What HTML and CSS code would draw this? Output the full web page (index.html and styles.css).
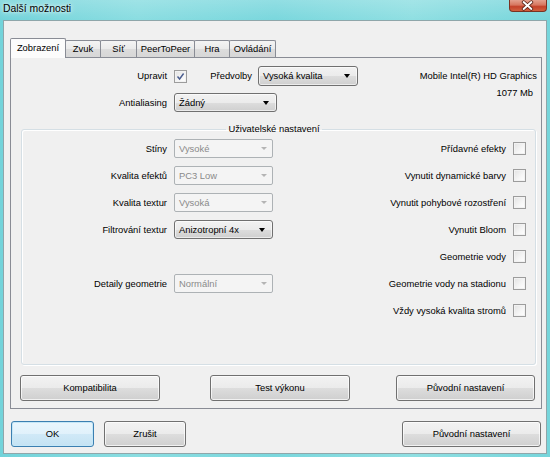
FILE: index.html
```html
<!DOCTYPE html>
<html lang="cs">
<head>
<meta charset="utf-8">
<title>Další možnosti</title>
<link rel="stylesheet" href="styles.css">
</head>
<body>
<div class="window">
  <div class="titlebar">
    <span class="title">Další možnosti</span>
    <div class="close">
      <svg width="38" height="12" viewBox="0 0 38 12">
        <path d="M15 2 L23 9 M23 2 L15 9" stroke="#5a2418" stroke-width="3.6" stroke-linecap="round" fill="none"/>
        <path d="M15 2 L23 9 M23 2 L15 9" stroke="#ffffff" stroke-width="2" stroke-linecap="round" fill="none"/>
      </svg>
    </div>
  </div>
  <div class="client">
    <div class="tabs">
      <div class="tab active t1">Zobrazení</div>
      <div class="tab t2">Zvuk</div>
      <div class="tab t3">Síť</div>
      <div class="tab t4">PeerToPeer</div>
      <div class="tab t5">Hra</div>
      <div class="tab t6">Ovládání</div>
    </div>
    <div class="panel">
      <div class="top">
        <div class="top-grid">
          <span class="lbl">Upravit</span>
          <div class="row1">
            <span class="chk">
              <svg width="11" height="11" viewBox="0 0 11 11"><path d="M2.5 5.5 L4.6 8 L8.6 2.5" stroke="#4a5d8f" stroke-width="1.4" fill="none"/></svg>
            </span>
            <span class="lbl preset-lbl">Předvolby</span>
            <div class="combo w-preset"><span>Vysoká kvalita</span><i class="arrow"></i></div>
          </div>
          <span class="lbl">Antialiasing</span>
          <div class="combo w-aa"><span>Žádný</span><i class="arrow"></i></div>
        </div>
        <div class="info">
          <div>Mobile Intel(R) HD Graphics</div>
          <div class="mem">1077 Mb</div>
        </div>
      </div>

      <fieldset class="group">
        <legend>Uživatelské nastavení</legend>
        <div class="group-grid">
          <span class="lbl">Stíny</span>
          <div class="combo dis"><span>Vysoké</span><i class="arrow"></i></div>
          <span class="lbl">Přídavné efekty</span>
          <span class="chk"></span>

          <span class="lbl">Kvalita efektů</span>
          <div class="combo dis"><span>PC3 Low</span><i class="arrow"></i></div>
          <span class="lbl">Vynutit dynamické barvy</span>
          <span class="chk"></span>

          <span class="lbl">Kvalita textur</span>
          <div class="combo dis"><span>Vysoká</span><i class="arrow"></i></div>
          <span class="lbl">Vynutit pohybové rozostření</span>
          <span class="chk"></span>

          <span class="lbl">Filtrování textur</span>
          <div class="combo"><span>Anizotropní 4x</span><i class="arrow"></i></div>
          <span class="lbl">Vynutit Bloom</span>
          <span class="chk"></span>

          <span></span>
          <span></span>
          <span class="lbl">Geometrie vody</span>
          <span class="chk"></span>

          <span class="lbl">Detaily geometrie</span>
          <div class="combo dis"><span>Normální</span><i class="arrow"></i></div>
          <span class="lbl">Geometrie vody na stadionu</span>
          <span class="chk"></span>

          <span></span>
          <span></span>
          <span class="lbl">Vždy vysoká kvalita stromů</span>
          <span class="chk"></span>
        </div>
      </fieldset>

      <div class="panel-buttons">
        <div class="btn w140">Kompatibilita</div>
        <div class="btn w140 mid">Test výkonu</div>
        <div class="btn w140 last">Původní nastavení</div>
      </div>
    </div>

    <div class="dialog-buttons">
      <div class="btn default ok">OK</div>
      <div class="btn cancel">Zrušit</div>
      <div class="btn reset">Původní nastavení</div>
    </div>
  </div>
</div>
</body>
</html>
```

FILE: styles.css
```css
html, body {
  margin: 0;
  padding: 0;
}

body {
  width: 550px;
  height: 457px;
  overflow: hidden;
  font-family: "Liberation Sans", Arial, sans-serif;
  font-size: 9.4px;
  color: #000;
}

.window {
  height: 457px;
  display: flex;
  flex-direction: column;
  background:
    linear-gradient(180deg, rgba(255,255,255,0.18), rgba(255,255,255,0) 20px),
    linear-gradient(90deg, #72d3da 0%, #8adde1 25%, #7ad7dd 50%, #8fdfe2 75%, #76d5db 100%);
}

.titlebar {
  height: 20px;
  flex: none;
  display: flex;
  align-items: flex-start;
}

.title {
  padding: 3px 0 0 3px;
  font-size: 10.4px;
  line-height: 12px;
  color: #000;
  text-shadow: 0 0 6px rgba(255,255,255,0.9), 0 0 3px rgba(255,255,255,0.8);
}

.close {
  margin-left: auto;
  margin-right: 3px;
  width: 38px;
  height: 12px;
  box-sizing: border-box;
  border: 1px solid #7a3222;
  border-top: none;
  border-radius: 0 0 4px 4px;
  background: linear-gradient(180deg, #e4a08e 0%, #d77760 45%, #c4422a 60%, #d1603f 100%);
  display: flex;
}

.close svg {
  display: block;
  margin-left: -1px;
}

.client {
  flex: 1;
  margin: 0 3px 3px 3px;
  border: 1px solid #8fa6aa;
  background: #f0f0f0;
  padding: 17px 4px 0 6px;
  display: flex;
  flex-direction: column;
}

/* Tabs */
.tabs {
  display: flex;
  align-items: flex-end;
  height: 19px;
}

.tab {
  box-sizing: border-box;
  height: 17px;
  border: 1px solid #898c95;
  border-bottom: none;
  border-radius: 2px 2px 0 0;
  margin-left: -1px;
  background: linear-gradient(180deg, #f4f4f4 0%, #eaeaea 50%, #dcdcdc 51%, #d7d7d7 100%);
  display: flex;
  align-items: center;
  justify-content: center;
  line-height: 12px;
}

.tab.active {
  height: 20px;
  margin-left: 0;
  margin-bottom: -1px;
  background: #fcfcfc;
  position: relative;
  z-index: 1;
  padding-bottom: 2px;
}

.t1 { width: 56px; }
.t2 { width: 36px; }
.t3 { width: 37px; }
.t4 { width: 59px; }
.t5 { width: 36px; }
.t6 { width: 47px; }

.panel {
  border: 1px solid #898c95;
  background: #f0f0f0;
  padding: 8px 0 7px 0;
}

.lbl {
  text-align: right;
  white-space: nowrap;
  align-self: center;
  line-height: 12px;
}

.top {
  display: flex;
  align-items: flex-start;
}

.top-grid {
  display: grid;
  grid-template-columns: 156px auto;
  grid-template-rows: 20px 19px;
  column-gap: 7px;
  row-gap: 7px;
}

.row1 {
  display: flex;
  align-items: center;
}

.preset-lbl {
  width: 71px;
  box-sizing: border-box;
  padding-right: 6px;
}

.info {
  margin-left: auto;
  padding: 4px 4px 0 0;
  text-align: right;
  line-height: 12px;
}

.info .mem {
  margin-top: 5px;
  padding-right: 4px;
}

/* Combo boxes */
.combo {
  box-sizing: border-box;
  height: 19px;
  width: 99px;
  border: 1px solid #707070;
  border-radius: 3px;
  background: linear-gradient(180deg, #f2f2f2 0%, #ebebeb 50%, #dddddd 51%, #cfcfcf 100%);
  box-shadow: inset 0 0 0 1px rgba(255,255,255,0.6);
  display: flex;
  align-items: center;
  padding: 0 7px 0 4px;
  line-height: 12px;
}

.combo span {
  flex: 1;
  white-space: nowrap;
}

.combo .arrow {
  width: 0;
  height: 0;
  border-left: 3.5px solid transparent;
  border-right: 3.5px solid transparent;
  border-top: 4px solid #000;
}

.combo.w-preset {
  width: 100px;
  height: 20px;
}

.combo.w-aa {
  width: 103px;
}

.combo.dis {
  background: #f4f4f4;
  border-color: #adb2b5;
  box-shadow: none;
  color: #8a8a8a;
  border-radius: 2px;
  padding-right: 5px;
}

.combo.dis .arrow {
  border-top-color: #b4b4b4;
  border-left-width: 3px;
  border-right-width: 3px;
  border-top-width: 3px;
}

/* Checkboxes */
.chk {
  box-sizing: border-box;
  width: 13px;
  height: 13px;
  border: 1px solid #9c9c9c;
  background: linear-gradient(135deg, #e2e2e2 0%, #f6f6f6 60%, #ffffff 100%);
  box-shadow: inset 0 0 0 1px #f2f2f2;
  align-self: center;
  display: flex;
  align-items: center;
  justify-content: center;
}

.chk svg {
  display: block;
}

/* Group box */
.group {
  margin: 11px 5px 0 10px;
  padding: 4px 9px 44px 0;
  border: 1px solid #d5dfe5;
  border-radius: 3px;
  box-shadow: inset 1px 1px 0 #ffffff, 1px 1px 0 #ffffff;
  min-width: 0;
}

.group legend {
  margin: 0 auto;
  padding: 0 2px;
  line-height: 12px;
}

.group-grid {
  display: grid;
  grid-template-columns: 145px 99px 1fr 13px;
  grid-auto-rows: 19px;
  column-gap: 7px;
  row-gap: 8px;
}

/* Buttons */
.btn {
  box-sizing: border-box;
  height: 26px;
  border: 1px solid #707070;
  border-radius: 3px;
  background: linear-gradient(180deg, #f2f2f2 0%, #ebebeb 50%, #dddddd 51%, #cfcfcf 100%);
  box-shadow: inset 0 0 0 1px rgba(255,255,255,0.7);
  display: flex;
  align-items: center;
  justify-content: center;
  line-height: 12px;
  white-space: nowrap;
}

.panel-buttons {
  display: flex;
  margin-top: 10px;
  padding: 0 6px 0 9px;
}

.w140 { width: 140px; }
.panel-buttons .mid { margin-left: 50px; }
.panel-buttons .last { margin-left: auto; width: 139px; }

.dialog-buttons {
  display: flex;
  margin-top: 12px;
  padding: 0 1px 0 1px;
}

.btn.default {
  border-color: #3c7fb1;
  box-shadow: inset 0 0 0 1px #c5e7f7;
  background: linear-gradient(180deg, #eaf6fd 0%, #e0f1fb 50%, #d0e9f7 51%, #c4e2f3 100%);
}

.ok { width: 83px; }
.cancel { width: 82px; margin-left: 10px; }
.reset { width: 139px; margin-left: auto; }
```
